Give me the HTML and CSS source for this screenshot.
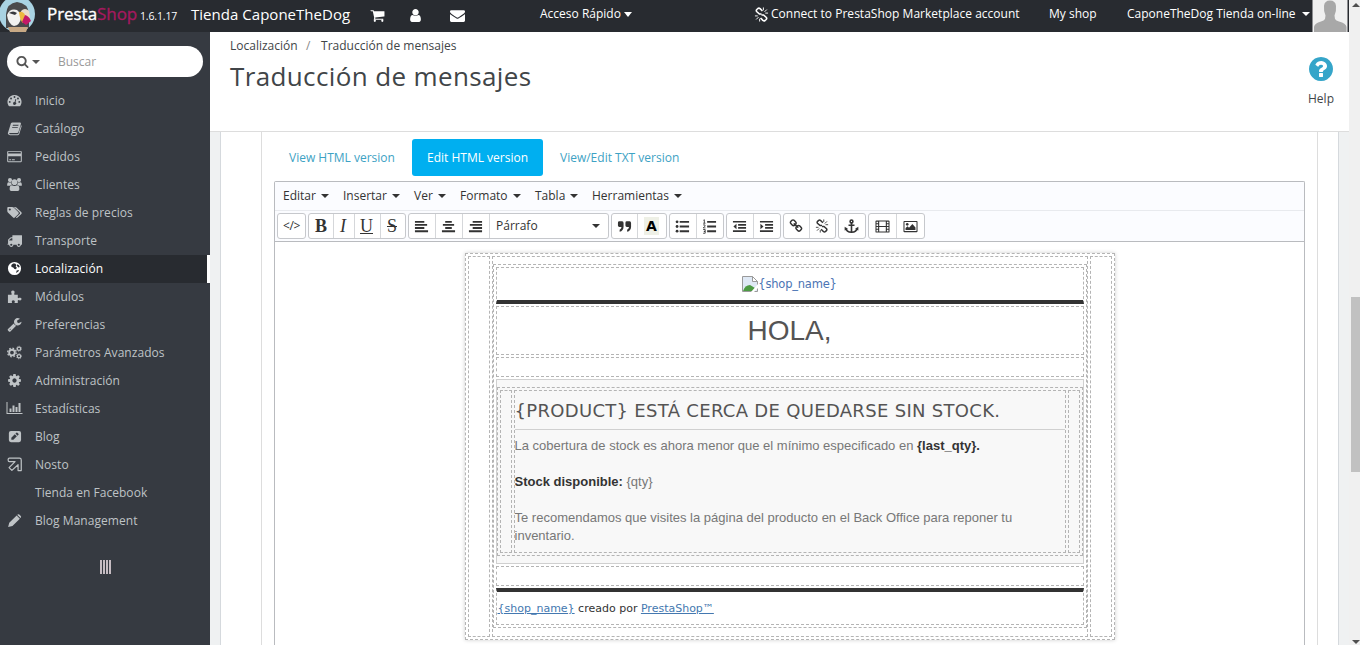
FILE: index.html
```html
<!DOCTYPE html>
<html lang="es">
<head>
<meta charset="utf-8">
<title>Traducción de mensajes</title>
<link rel="stylesheet" href="styles.css">
</head>
<body>
<svg class="sprite" aria-hidden="true">
  <symbol id="search" viewBox="0 0 1792 1792"><path d="M1216 832q0-185-131.5-316.5t-316.5-131.5-316.5 131.5-131.5 316.5 131.5 316.5 316.5 131.5 316.5-131.5 131.5-316.5zm512 832q0 52-38 90t-90 38q-54 0-90-38l-343-342q-179 124-399 124-143 0-273.500-55.500t-225-150-150-225-55.500-273.500 55.500-273.500 150-225 225-150 273.500-55.500 273.500 55.500 225 150 150 225 55.500 273.500q0 220-124 399l343 343q37 37 37 90z"/></symbol>
  <symbol id="cart" viewBox="0 0 1792 1792"><path d="M704 1536q0 52-38 90t-90 38-90-38-38-90 38-90 90-38 90 38 38 90zm896 0q0 52-38 90t-90 38-90-38-38-90 38-90 90-38 90 38 38 90zm128-1088v512q0 24-16.500 42.500t-40.500 21.500l-1044 122q13 60 13 70 0 16-24 64h920q26 0 45 19t19 45-19 45-45 19h-1024q-26 0-45-19t-19-45q0-11 8-31.500t16-36 21.500-40 15.500-29.500l-177-823h-204q-26 0-45-19t-19-45 19-45 45-19h256q16 0 28.500 6.500t19.500 15.500 13 24.500 8 26 5.500 29.500 4.500 26h1201q26 0 45 19t19 45z"/></symbol>
  <symbol id="user" viewBox="0 0 1792 1792"><path d="M1536 1399q0 109-62.500 187t-150.500 78h-854q-88 0-150.500-78t-62.500-187q0-85 8.500-160.500t31.500-152 58.500-131 94-89 134.500-34.500q131 128 313 128t313-128q76 0 134.500 34.500t94 89 58.500 131 31.500 152 8.500 160.500zm-256-887q0 159-112.500 271.500t-271.500 112.500-271.500-112.500-112.500-271.500 112.500-271.500 271.500-112.500 271.500 112.500 112.500 271.500z"/></symbol>
  <symbol id="mail" viewBox="0 0 1792 1792"><path d="M1792 710v794q0 66-47 113t-113 47h-1472q-66 0-113-47t-47-113v-794q44 49 101 87 362 246 497 345 57 42 92.500 65.500t94.500 48 110 24.500h2q51 0 110-24.500t94.500-48 92.500-65.500q170-123 498-345 57-39 100-87zm0-294q0 79-49 151t-122 123q-376 261-468 325-10 7-42.500 31t-54 38.500-52 32.500-57.500 27-50 9h-2q-23 0-50-9t-57.500-27-52-32.500-54-38.500-42.500-31q-91-64-262-182.500t-205-142.500q-62-42-117-115.500t-55-136.500q0-78 41.500-130t118.500-52h1472q65 0 112.500 47t47.500 113z"/></symbol>
  <symbol id="help" viewBox="128 128 1536 1536"><path d="M1024 1376v-192q0-14-9-23t-23-9h-192q-14 0-23 9t-9 23v192q0 14 9 23t23 9h192q14 0 23-9t9-23zm256-672q0-88-55.500-163t-138.500-116-170-41q-243 0-371 213-15 24 8 42l132 100q7 6 19 6 16 0 25-12 53-68 86-92 34-24 86-24 48 0 85.500 26t37.500 59q0 38-20 61t-68 45q-63 28-115.500 86.500t-52.500 125.500v36q0 14 9 23t23 9h192q14 0 23-9t9-23q0-19 21.500-49.500t54.500-49.500q32-18 49-28.500t46-35 44.500-48 28-60.500 12.500-81zm384 192q0 209-103 385.500t-279.500 279.500-385.500 103-385.500-103-279.500-279.500-103-385.500 103-385.500 279.500-279.500 385.500-103 385.500 103 279.500 279.500 103 385.500z"/></symbol>
  <symbol id="cog" viewBox="0 0 1792 1792"><path d="M1152 896q0-106-75-181t-181-75-181 75-75 181 75 181 181 75 181-75 75-181zm512-109v222q0 12-8 23t-20 13l-185 28q-19 54-39 91 35 50 107 138 10 12 10 25t-9 23q-27 37-99 108t-94 71q-12 0-26-9l-138-108q-44 23-91 38-16 136-29 186-7 28-36 28h-222q-14 0-24.500-8.500t-11.500-21.500l-28-184q-49-16-90-37l-141 107q-10 9-25 9-14 0-25-11-126-114-165-168-7-10-7-23 0-12 8-23 15-21 51-66.500t54-70.500q-27-50-41-99l-183-27q-13-2-21-12.500t-8-23.500v-222q0-12 8-23t19-13l186-28q14-46 39-92-40-57-107-138-10-12-10-24 0-10 9-23 26-36 98.500-107.500t94.500-71.500q13 0 26 10l138 107q44-23 91-38 16-136 29-186 7-28 36-28h222q14 0 24.500 8.500t11.500 21.500l28 184q49 16 90 37l142-107q9-9 24-9 13 0 25 10 129 119 165 170 7 8 7 22 0 12-8 23-15 21-51 66.500t-54 70.500q26 50 41 98l183 28q13 2 21 12.500t8 23.500z"/></symbol>
  <symbol id="wrench" viewBox="0 0 1792 1792"><path d="M448 1472q0-26-19-45t-45-19-45 19-19 45 19 45 45 19 45-19 19-45zm644-420l-682 682q-37 37-90 37-52 0-91-37l-106-108q-38-36-38-90 0-53 38-91l681-681q39 98 114.500 173.500t173.500 114.500zm634-435q0 39-23 106-47 134-164.500 217.500t-258.500 83.500q-185 0-316.500-131.500t-131.500-316.500 131.500-316.500 316.500-131.500q58 0 121.500 16.500t107.500 46.500q16 11 16 28t-16 28l-293 169v224l193 107q5-3 79-48.500t135.500-81 70.500-35.500q15 0 23.500 10t8.500 25z"/></symbol>
  <symbol id="pencil" viewBox="0 0 16 16"><path d="M10.300 2.600 13.700 6 5.800 13.800 1.200 15l1.200-4.600zM11.300 1.700q.9-.8 1.800 0l1.600 1.600q.8.900 0 1.800l-.3.300L11 2z"/></symbol>
  <symbol id="truck" viewBox="0 0 1792 1792"><path d="M640 1408q0-52-38-90t-90-38-90 38-38 90 38 90 90 38 90-38 38-90zm-384-512h384v-256h-158q-13 0-22 9l-195 195q-9 9-9 22v30zm1280 512q0-52-38-90t-90-38-90 38-38 90 38 90 90 38 90-38 38-90zm256-1088v1024q0 15-4 26.500t-13.500 18.500-16.500 11.500-23.500 6-22.500 2-25.500 0-22.500-.5q0 106-75 181t-181 75-181-75-75-181h-384q0 106-75 181t-181 75-181-75-75-181h-64q-3 0-22.500.5t-25.500 0-22.500-2-23.500-6-16.500-11.500-13.500-18.500-4-26.500q0-26 19-45t45-19v-320q0-8-.5-35t0-38 2.500-34.500 6.500-37 14-30.500 22.500-30l198-198q19-19 50.500-32t58.500-13h160v-192q0-26 19-45t45-19h1024q26 0 45 19t19 45z"/></symbol>
  <symbol id="link" viewBox="0 0 1792 1792"><path d="M1520 1216q0-40-28-68l-208-208q-28-28-68-28-42 0-72 32 3 3 19 18.500t21.500 21.500 15 19 13 25.500 3.500 27.500q0 40-28 68t-68 28q-15 0-27.500-3.500t-25.500-13-19-15-21.500-21.500-18.500-19q-33 31-33 73 0 40 28 68l206 207q27 27 68 27 40 0 68-26l147-146q28-28 28-67zm-703-705q0-40-28-68l-206-207q-28-28-68-28-39 0-68 27l-147 146q-28 28-28 67 0 40 28 68l208 208q27 27 68 27 42 0 72-31-3-3-19-18.500t-21.500-21.500-15-19-13-25.500-3.500-27.500q0-40 28-68t68-28q15 0 27.500 3.500t25.500 13 19 15 21.500 21.500 18.500 19q33-31 33-73zm895 705q0 120-85 203l-147 146q-83 83-203 83-121 0-204-85l-206-207q-83-83-83-203 0-123 88-209l-88-88q-86 88-208 88-120 0-204-84l-208-208q-84-84-84-204t85-203l147-146q83-83 203-83 121 0 204 85l206 207q83 83 83 203 0 123-88 209l88 88q86-88 208-88 120 0 204 84l208 208q84 84 84 204z"/></symbol>
  <symbol id="unlink" viewBox="0 0 16 16"><g fill="none" stroke="currentColor" stroke-width="1.700"><path d="M8 7.500H5.800L2.800 4.800Q2 3.700 3 2.700L4.200 1.600Q5.300.8 6.500 1.800L9 4.300M8 8.500h2.200l3 2.700q.8 1.100-.2 2.100l-1.200 1.100q-1.100.8-2.300-.2L7 11.700"/><path stroke-width="1" d="M4.800 10.800 2.300 13.300M4 9.500H1M6 12.500v3M11.200 5.200 13.700 2.700M12 6.500H15M10 3.500V.5"/></g></symbol>
  <symbol id="gauge" viewBox="0 0 16 16"><path fill-rule="evenodd" d="M8 2a7.500 7.500 0 0 0-6.300 11.500q.3.500.8.500h11q.5 0 .8-.5A7.500 7.500 0 0 0 8 2zM8 3.200a1 1 0 1 1 0 2 1 1 0 0 1 0-2zM4.300 4.800a1 1 0 1 1 0 2 1 1 0 0 1 0-2zM2.900 8.500a1 1 0 1 1 0 2 1 1 0 0 1 0-2zM13.100 8.500a1 1 0 1 1 0 2 1 1 0 0 1 0-2zM11.700 4.800a1 1 0 1 1 0 2 1 1 0 0 1 0-2zM9 6.300l.9.300-.8 3.200a1.600 1.600 0 1 1-1-.3z"/></symbol>
  <symbol id="book" viewBox="0 0 16 16"><path fill-rule="evenodd" d="M5.800 1.500h8.300q1 .2.800 1.300l-2.700 9q-.4 1-1.300 1H3q-.9 0-.6.700.3.600 1.200.6h7.700q.7 0 1-.8L15 4.500q.8.500.6 1.200l-2.500 8.200q-.4 1.200-1.600 1.200H3.300Q1.500 15 1 13.500q-.3-.8.200-1.500L4.200 2.500q.5-1 1.600-1zM6.400 4l-.4 1h6l.4-1zM5.700 6.300l-.4 1h6l.4-1z"/></symbol>
  <symbol id="card" viewBox="0 0 16 16"><path fill-rule="evenodd" d="M1.500 2h13q1.300 0 1.300 1.300v9.400q0 1.300-1.300 1.300h-13Q.2 14 .2 12.700V3.300Q.2 2 1.500 2zM1.300 3v1.800h13.400V3zM1.300 7.600V13h13.400V7.600zM2.400 11h2v1h-2zM5.300 11h3v1h-3z"/></symbol>
  <symbol id="users" viewBox="0 0 16 16"><circle cx="3.200" cy="3.300" r="2.200"/><circle cx="12.800" cy="3.300" r="2.200"/><circle cx="8" cy="5.500" r="3"/><path d="M.2 9.200Q0 5.600 1.600 5.500q1.500.8 2.900.2Q4.500 7.300 5.200 8.200 4 8.300 3.300 9.300H1Q.3 9.300.2 9.200zM15.800 9.200Q16 5.600 14.400 5.500q-1.500.8-2.900.2 0 1.600-.7 2.500 1.200.1 1.900 1.100H15q.7 0 .8-.1zM5.200 8.800q2.800 1.700 5.600 0Q13.300 8.900 13.200 13q0 1.800-1.700 1.800h-7Q2.800 14.800 2.800 13q-.1-4.100 2.400-4.200z"/></symbol>
  <symbol id="tags" viewBox="0 0 16 16"><path fill-rule="evenodd" d="M1.300 2h4.200q1 0 1.700.7l5 5q.8.900 0 1.800L8.300 13.400q-.9.800-1.800 0l-5.300-5.200Q.3 7.400.3 6.300V3Q.3 2 1.300 2zM3 3.600a1.100 1.100 0 1 0 0 2.200 1.100 1.100 0 0 0 0-2.200z"/><path d="M7.300 2h1q1 0 1.700.7l5.300 5q.8.900 0 1.800l-4 3.900q-1 .9-1.900-.1l4-3.700q.9-.9 0-1.900z"/></symbol>
  <symbol id="globe" viewBox="0 0 16 16"><path fill-rule="evenodd" d="M8 1a7 7 0 1 1 0 14A7 7 0 0 1 8 1zM6.500 2.700 4.600 4.200l.2 2.200 1.900.5 1.200 1.500 1.800.4.700-1.900-1.200-1.100.9-1.500-1.500-1.700zM11 3.500l-.5 1.600 1.500 1.700 1.600-.3-.8-1.900zM10.300 10l-.6 2.700 2.400-1.400.8-1.800z"/></symbol>
  <symbol id="puzzle" viewBox="0 0 16 16"><path d="M1 6h3.700Q5.400 5.600 4.700 4.500 3.800 1.600 6.300 1.500 8.700 1.600 7.900 4.500 7.200 5.600 8 6h3.500v3.400q.4.700 1.300 0 2.600-.7 2.700 1.300-.2 2-2.500 1.400-1.200-.8-1.500.1V15H8.200q-.5-.4.200-1.500.1-1.500-1.700-1.600-2 .2-1.600 1.800.7 1-.1 1.300H1z"/></symbol>
  <symbol id="cogs" viewBox="0 0 16 16"><g fill="none" stroke="currentColor"><circle cx="5.300" cy="8" r="3" stroke-width="2"/><circle cx="5.300" cy="8" r="4.600" stroke-width="1.400" stroke-dasharray="1.800 1.810"/><circle cx="12.800" cy="4" r="1.800" stroke-width="1.300"/><circle cx="12.800" cy="4" r="2.700" stroke-width=".8" stroke-dasharray="1.060 1.060"/><circle cx="12.800" cy="12" r="1.800" stroke-width="1.300"/><circle cx="12.800" cy="12" r="2.700" stroke-width=".8" stroke-dasharray="1.060 1.060"/></g></symbol>
  <symbol id="bars" viewBox="0 0 16 16"><path d="M0 2h1v11h15v1H0zM3 8.500h2V12H3zM6 5.500h2V12H6zM9 7h2v5H9zM12 3h2v9h-2z"/></symbol>
  <symbol id="penbox" viewBox="0 0 16 16"><path fill-rule="evenodd" d="M4.200 2h8.600Q15 2 15 4.200v7.600q0 2.200-2.200 2.200H4.200Q2 14 2 11.800V4.200Q2 2 4.200 2zM4.600 9.300v2.200h2.200l3.700-3.700-2.200-2.200zM9 4.900l2.200 2.200 1-1q.5-.5 0-1l-1.200-1.200q-.5-.5-1 0z"/></symbol>
  <symbol id="nosto" viewBox="0 0 16 16"><path fill="none" stroke="currentColor" stroke-width="1.300" stroke-linejoin="round" d="M2.600 1.200H13.300Q15.200 1.200 15.200 3.100V14.500H11.800V8.200L5.200 14.300 2.200 11.300 8.600 5H2.600Q1.200 5 1.200 3.100T2.600 1.200z"/></symbol>
  <symbol id="anchor" viewBox="0 0 16 16"><g fill="none" stroke="currentColor" stroke-width="1.700"><circle cx="8" cy="2.600" r="1.500"/><path d="M8 4v10M4.800 6.700h6.400M1.700 9.600Q2.600 14 8 14.200 13.400 14 14.300 9.600"/></g><path d="M.7 12.300V8.200l3.700 2.500zM15.300 12.300V8.200l-3.700 2.500z"/></symbol>
  <symbol id="film" viewBox="0 0 16 16"><path fill-rule="evenodd" d="M1.500 1.500h13q1 0 1 1v11q0 1-1 1h-13q-1 0-1-1v-11q0-1 1-1zM4.500 2.600v4.800h7V2.600zM4.500 8.600v4.800h7V8.600zM1.600 2.800v1.700h1.700V2.800zM1.600 5.700v1.700h1.700V5.700zM1.600 8.600v1.700h1.700V8.600zM1.600 11.500v1.700h1.700v-1.700zM12.700 2.800v1.700h1.700V2.800zM12.700 5.700v1.700h1.700V5.700zM12.700 8.600v1.700h1.700V8.600zM12.700 11.500v1.700h1.700v-1.700z"/></symbol>
  <symbol id="image" viewBox="0 0 16 16"><path fill-rule="evenodd" d="M1.500 2h13q1 0 1 1v10q0 1-1 1h-13q-1 0-1-1V3q0-1 1-1zM1.600 3.100v9.800h12.800V3.100z"/><circle cx="4.500" cy="5.700" r="1.400"/><path d="M2.700 11.800V9.700l2.200-2 1.500 1.500 3.600-3.800L13.300 9v2.800z"/></symbol>
  <symbol id="al" viewBox="0 0 16 16"><path d="M1 2h10v2H1zM1 5.300h13v2H1zM1 8.600h10v2H1zM1 12h14v2H1z"/></symbol>
  <symbol id="ac" viewBox="0 0 16 16"><path d="M4.500 2h7v2h-7zM2 5.300h12v2H2zM4.500 8.600h7v2h-7zM1 12h14v2H1z"/></symbol>
  <symbol id="ar" viewBox="0 0 16 16"><path d="M5 2h10v2H5zM2 5.300h13v2H2zM5 8.600h10v2H5zM1 12h14v2H1z"/></symbol>
  <symbol id="ul" viewBox="0 0 16 16"><circle cx="2.200" cy="3" r="1.500"/><circle cx="2.200" cy="8" r="1.500"/><circle cx="2.200" cy="13" r="1.500"/><path d="M5 2h10v2H5zM5 7h10v2H5zM5 12h10v2H5z"/></symbol>
  <symbol id="ol" viewBox="0 0 16 16"><path d="M5.500 2H15v2H5.500zM5.500 7H15v2H5.500zM5.500 12H15v2H5.500z"/><path fill="none" stroke="currentColor" stroke-width=".9" d="M1.500 1.400 2.500.8V4.500M1.300 4.500h2.400M1.200 6.300h2v1.300L1.300 9.500h2.400M1.200 11.200h2.200v2H2h1.400v2H1.200"/></symbol>
  <symbol id="out" viewBox="0 0 16 16"><path d="M1 2h14v1.800H1zM6.500 5.300H15v1.800H6.500zM6.500 8.600H15v1.800H6.500zM1 12h14v1.800H1zM4.800 5v5.800L1.500 7.900z"/></symbol>
  <symbol id="in" viewBox="0 0 16 16"><path d="M1 2h14v1.800H1zM6.500 5.300H15v1.800H6.500zM6.500 8.600H15v1.800H6.500zM1 12h14v1.800H1zM1.500 5v5.800l3.300-2.900z"/></symbol>
  <symbol id="quote" viewBox="0 0 16 16"><path d="M2.500 2.500h3Q7 2.500 7 4.300v3.900q-.2 4.500-4.200 5.300V11.400Q4.800 10.500 4.800 8.500H2.500Q1 8.500 1 7V4q0-1.500 1.500-1.500zM10.500 2.500h3q1.500 0 1.500 1.800v3.900q-.2 4.500-4.200 5.300V11.400q2-.9 2-2.900h-2.300Q9 8.500 9 7V4q0-1.500 1.500-1.500z"/></symbol>
</svg>
<div class="app">
  <header class="topbar">
    <svg class="puffin" viewBox="0 0 36 32">
      <circle cx="17" cy="14" r="18" fill="#a9d3e3"/>
      <path d="M6 28V14Q7 3 17 2q11 1 12 12v14z" fill="#4a4a4c"/>
      <path d="M7 15Q10 8 17 10q4 3 4 8-1 7-7 8-6-2-7-11z" fill="#f2f2f0"/>
      <path d="M21 11Q25 7 29 11l1 6-4 4-4-3z" fill="#e9dccb"/>
      <path d="M19 12q4-1 6 3l-2 8q-3-2-4-11z" fill="#edb83f"/>
      <path d="M25 15q4 1 6 6l-5 4-4-3z" fill="#c41968"/>
      <path d="M9 13q4-3 8 0l-2 2q-3-1-6-2z" fill="#36383d"/>
      <path d="M8 27h20l-2 5H10z" fill="#c8a985"/>
    </svg>
    <div class="brand"><span>Presta</span><span class="pink">Shop</span></div>
    <span class="version">1.6.1.17</span>
    <span class="store">Tienda CaponeTheDog</span>
    <svg class="ic t1"><use href="#cart"/></svg>
    <svg class="ic t2"><use href="#user"/></svg>
    <svg class="ic t3"><use href="#mail"/></svg>
    <span class="quick">Acceso Rápido<i class="caret big"></i></span>
    <span class="connect"><svg class="ic"><use href="#unlink"/></svg>Connect to PrestaShop Marketplace account</span>
    <span class="myshop">My shop</span>
    <span class="account">CaponeTheDog Tienda on-line<i class="caret"></i></span>
    <svg class="avatar" viewBox="0 0 35 32"><rect width="35" height="32" fill="#f0f0f0"/><path d="M17.500.5Q23 .5 23.500 6q.5 5-1.500 9.500l.5 3.500q1 1.500 4 2.500 7 1.500 7.500 5.500v5H1.500v-5Q2 23 8.500 21.500q3-1 4-2.500l.5-3.500Q11 11 11.500 6 12 .5 17.500.5z" fill="#a8a8a8"/></svg>
  </header>
  <div class="body">
    <nav class="side">
      <div class="search"><svg class="ic"><use href="#search"/></svg><i class="caret"></i><span>Buscar</span></div>
      <div class="menu">
        <a><svg class="ic"><use href="#gauge"/></svg>Inicio</a>
        <a><svg class="ic"><use href="#book"/></svg>Catálogo</a>
        <a><svg class="ic"><use href="#card"/></svg>Pedidos</a>
        <a><svg class="ic"><use href="#users"/></svg>Clientes</a>
        <a><svg class="ic"><use href="#tags"/></svg>Reglas de precios</a>
        <a><svg class="ic"><use href="#truck"/></svg>Transporte</a>
        <a class="on"><svg class="ic"><use href="#globe"/></svg>Localización</a>
        <a><svg class="ic"><use href="#puzzle"/></svg>Módulos</a>
        <a><svg class="ic"><use href="#wrench"/></svg>Preferencias</a>
        <a><svg class="ic"><use href="#cogs"/></svg>Parámetros Avanzados</a>
        <a><svg class="ic"><use href="#cog"/></svg>Administración</a>
        <a><svg class="ic wide"><use href="#bars"/></svg>Estadísticas</a>
        <a><svg class="ic"><use href="#penbox"/></svg>Blog</a>
        <a><svg class="ic"><use href="#nosto"/></svg>Nosto</a>
        <a><svg class="ic"></svg>Tienda en Facebook</a>
        <a><svg class="ic"><use href="#pencil"/></svg>Blog Management</a>
      </div>
      <div class="grip"><i></i><i></i><i></i><i></i></div>
    </nav>
    <main class="main">
      <div class="head">
        <div class="titles">
          <div class="crumbs"><span>Localización</span><em>/</em><span>Traducción de mensajes</span></div>
          <h1>Traducción de mensajes</h1>
        </div>
        <div class="help"><svg><use href="#help"/></svg><span>Help</span></div>
      </div>
      <div class="page">
        <div class="panel">
          <div class="inner">
            <div class="tabs"><a class="v">View HTML version</a><a class="e">Edit HTML version</a><a>View/Edit TXT version</a></div>
            <div class="editor">
              <div class="menubar">
                <span class="m1">Editar<i class="caret"></i></span><span class="m2">Insertar<i class="caret"></i></span><span class="m3">Ver<i class="caret"></i></span><span class="m4">Formato<i class="caret"></i></span><span class="m5">Tabla<i class="caret"></i></span><span>Herramientas<i class="caret"></i></span>
              </div>
              <div class="tools">
                <div class="grp g1"><b class="code">&lt;/&gt;</b></div>
                <div class="grp g2"><b class="sf bold">B</b><b class="sf ital">I</b><b class="sf und">U</b><b class="sf strike">S</b></div>
                <div class="grp g3"><b><svg class="ic"><use href="#al"/></svg></b><b><svg class="ic"><use href="#ac"/></svg></b><b><svg class="ic"><use href="#ar"/></svg></b><b class="format"><span>Párrafo</span><i class="caret"></i></b></div>
                <div class="grp g4"><b><svg class="ic"><use href="#quote"/></svg></b><b><span class="color">A</span></b></div>
                <div class="grp g5"><b><svg class="ic"><use href="#ul"/></svg></b><b><svg class="ic"><use href="#ol"/></svg></b></div>
                <div class="grp g5"><b><svg class="ic"><use href="#out"/></svg></b><b><svg class="ic"><use href="#in"/></svg></b></div>
                <div class="grp g6"><b><svg class="ic small"><use href="#link"/></svg></b><b><svg class="ic small"><use href="#unlink"/></svg></b></div>
                <div class="grp g7"><b><svg class="ic"><use href="#anchor"/></svg></b></div>
                <div class="grp g8"><b><svg class="ic"><use href="#film"/></svg></b><b><svg class="ic"><use href="#image"/></svg></b></div>
              </div>
              <div class="canvas">
                <div class="mail">
                  <div class="d gutter"></div>
                  <div class="d middle">
                    <div class="d content">
                      <div class="d logo"><svg viewBox="0 0 16 16"><path d="M.5.500h10l5 5v10H.5z" fill="#dfe9f5" stroke="#9a9a9a"/><path d="M1 15q2-6 7-6l5 3v3z" fill="#4d9b43"/><path d="M10.500.5v5h5z" fill="#fff" stroke="#9a9a9a"/><path d="m16 8-7 8h3l4-4z" fill="#fff"/></svg><a>{shop_name}</a></div>
                      <div class="d hola">HOLA,</div>
                      <div class="d gap"></div>
                      <div class="box">
                        <div class="d boxtable">
                          <div class="d thin"></div>
                          <div class="d msg">
                            <h2>{PRODUCT} ESTÁ CERCA DE QUEDARSE SIN STOCK.</h2>
                            <p>La cobertura de stock es ahora menor que el mínimo especificado en <strong>{last_qty}.</strong></p>
                            <p><strong>Stock disponible:</strong> {qty}</p>
                            <p>Te recomendamos que visites la página del producto en el Back Office para reponer tu<br>inventario.</p>
                          </div>
                          <div class="d thin"></div>
                        </div>
                      </div>
                      <div class="d gap"></div>
                      <div class="d foot"><a>{shop_name}</a> creado por <a>PrestaShop™</a></div>
                    </div>
                  </div>
                  <div class="d gutter"></div>
                </div>
              </div>
            </div>
          </div>
        </div>
      </div>
    </main>
  </div>
  <div class="scroll"><i class="up"></i><i class="thumb"></i><i class="down"></i></div>
</div>
</body>
</html>
```

FILE: styles.css
```css
* { box-sizing: border-box; }
body { margin: 0; font: 12px/18px "Open Sans", "Noto Sans", sans-serif; color: #414548; background: #fff; }
.sprite { display: none; }
.app { display: grid; grid-template: 32px 613px / 1349px 11px; width: 1360px; height: 645px; overflow: hidden; }
.ic { width: 15px; height: 15px; fill: currentColor; flex: none; display: block; }
i, em { font-style: normal; }
.caret { display: inline-block; flex: none; border: 4px solid transparent; border-top-color: currentColor; border-bottom: 0; }
.caret.big { border-width: 5px 4.500px 0; margin-left: 3px; }

.topbar { background: #282b30; color: #fff; display: flex; align-items: center; height: 32px; padding-bottom: 4px; white-space: nowrap; }
.topbar > * { flex: none; }
.puffin { width: 36px; height: 32px; margin-bottom: -4px; }
.brand { width: 87px; margin-left: 11px; font-size: 17px; letter-spacing: -.05px; font-weight: 400; -webkit-text-stroke: .35px currentColor; margin-top: -1px; }
.brand .pink { color: #a5195f; }
.version { margin-left: 6px; width: 51px; font-size: 10.500px; padding-top: 3px; letter-spacing: -.15px; }
.store { width: 179px; font-size: 15px; margin-top: -1px; letter-spacing: .03px; }
.topbar .ic { width: 15px; height: 15px; }
.t1, .t2, .t3 { margin-top: 3px; }
.t2 { margin-left: 23px; }
.t3 { margin-left: 27px; }
.quick { margin-left: 75px; width: 214px; display: flex; align-items: center; letter-spacing: 0; }
.connect { display: flex; align-items: center; width: 295px; gap: 2px; letter-spacing: .02px; }
.myshop { width: 78px; }
.account { width: 185px; display: flex; align-items: center; }
.account .caret { margin-left: 6px; }
.avatar { width: 36px; height: 32px; margin-bottom: -4px; }

.body { grid-row: 2; display: grid; grid-template-columns: 210px 1139px; }
.side { background: #363a41; color: #bfc3c6; padding-top: 14px; }
.search { height: 31px; width: 196px; margin-left: 7px; border-radius: 16px; background: #fff; display: flex; align-items: center; padding-left: 9px; color: #555; }
.search .ic { width: 13px; height: 13px; }
.search .caret { margin-left: 3px; }
.search span { margin-left: 18px; color: #999; }
.menu { margin-top: 10px; font-size: 12px; }
.menu a { height: 28px; display: flex; align-items: center; padding-left: 7px; gap: 13px; letter-spacing: .04px; }
.menu .ic { margin-bottom: 2px; }
.menu .wide { width: 17px; height: 16px; margin-left: -1px; margin-right: -1px; }
.menu .on { background: #282b30; color: #fff; border-right: 3px solid #fff; }
.grip { display: flex; justify-content: center; gap: 1px; margin-top: 25px; }
.grip i { width: 2px; height: 14px; background: #c6bcc2; }

.main { display: flex; flex-direction: column; height: 613px; background: #eff1f2; }
.head { height: 100px; flex: none; background: #fff; border-bottom: 1px solid #ddd; display: flex; justify-content: space-between; padding: 5px 14px 0 20px; }
.crumbs { display: flex; gap: 9.500px; }
.crumbs em { color: #888; margin-left: -1px; margin-right: 1px; }
h1 { margin: 6px 0 0; font: 400 26px/30px "Open Sans", sans-serif; letter-spacing: .37px; }
.help { display: flex; flex-direction: column; align-items: center; width: 28px; padding-top: 20px; }
.help svg { width: 24px; height: 24px; fill: #35a5c9; }
.help span { margin-top: 9px; }
.page { flex: 1; padding: 0 10px; display: flex; }
.panel { flex: 1; background: #fff; border: 1px solid #d5d9dd; border-width: 0 1px; padding: 0 20px 0 40px; }
.inner { height: 100%; border: 1px solid #ddd; border-width: 0 1px; padding: 7px 12px 0; display: flex; flex-direction: column; }
.tabs { display: flex; color: #3da2c4; height: 37px; align-items: center; }
.tabs a { padding-left: 15px; }
.tabs .v { width: 138px; }
.tabs .e { width: 131px; margin-right: 2px; line-height: 37px; background: #00aff0; color: #fff; border-radius: 3px; }
.editor { margin-top: 5px; flex: 1; min-height: 0; width: 1031px; border: 1px solid #b9bbbf; border-bottom: 0; border-radius: 2px 2px 0 0; display: flex; flex-direction: column; color: #333; overflow: hidden; }
.menubar { height: 29px; flex: none; background: #fbfcff; border-bottom: 1px solid #e8eaee; display: flex; padding: 5px 0 0 8px; }
.menubar span { white-space: nowrap; }
.menubar .caret { margin: 0 0 2px 5px; }
.m1 { width: 60px; } .m2 { width: 71px; } .m3 { width: 46px; } .m4 { width: 75px; } .m5 { width: 57px; }
.tools { height: 31px; flex: none; background: #fbfcff; border-bottom: 1px solid #b9bbbf; display: flex; gap: 2px; padding: 2px 0 0 2px; }
.grp { height: 26px; border: 1px solid #c6c8cc; border-radius: 3px; background: #fff; display: grid; overflow: hidden; }
.grp b { display: flex; align-items: center; justify-content: center; border-left: 1px solid #d5d7da; font-weight: 400; padding-right: 1px; }
.grp b:first-child { border-left: 0; }
.grp .small { width: 14px; height: 14px; }
.g1 { width: 29px; }
.g2 { width: 98px; grid-template-columns: 24px 21px 26px 1fr; }
.g3 { width: 201px; grid-template-columns: 26px 27px 27px 1fr; }
.g4 { width: 56px; grid-template-columns: 25px 1fr; }
.g5 { width: 55px; grid-template-columns: 26px 1fr; }
.g6 { width: 53px; grid-template-columns: 25px 1fr; }
.g7 { width: 28px; }
.g8 { width: 57px; grid-template-columns: 27px 1fr; }
.grp .code { font-size: 12px; letter-spacing: -.3px; padding: 0; }
.grp .sf { font: 18px/24px "Liberation Serif", serif; padding-right: 2px; }
.grp .bold { font-weight: 700; padding-right: 0; }
.grp .ital { font-style: italic; }
.und { text-decoration: underline; }
.strike { text-decoration: line-through; }
.grp .format { justify-content: space-between; padding: 0 8px 0 6px; }
.color { font: 700 14px/18px "DejaVu Sans", sans-serif; background: #eef0e6; width: 15px; text-align: center; color: #000; }
.canvas { padding: 11px 0 0 190px; background: #fff; }
.d, .mail { border: 1px dashed #b4b4b4; }
.mail { width: 650px; height: 387px; padding: 2px; display: flex; gap: 2px; box-shadow: 0 0 4px #ccc; }
.gutter { width: 22px; }
.gutter:last-child { width: 23px; }
.middle { width: 596px; flex: none; padding: 7px 0 0; }
.content { height: 364px; padding: 2px; width: 594px; display: flex; flex-direction: column; gap: 2px; }
.logo { height: 37px; border-bottom: 4px solid #333; display: flex; justify-content: center; align-items: center; font: 11.500px "DejaVu Sans", sans-serif; color: #4b74b4; letter-spacing: -.2px; }
.logo svg { width: 16px; height: 16px; }
.hola { height: 49px; text-align: center; font: 28px/47px "Liberation Sans", sans-serif; color: #555454; }
.gap { height: 20px; }
.box { height: 185px; border: 1px solid #d0d0d0; background: #f8f8f8; padding-top: 7px; }
.boxtable { height: 169px; padding: 2px; display: flex; gap: 2px; }
.thin { width: 12px; flex: none; }
.msg { flex: 1; font: 13px/18px "Liberation Sans", sans-serif; color: #777; white-space: nowrap; }
.msg h2 { margin: 0 0 7px; height: 39px; font: 18px/40px "DejaVu Sans", sans-serif; letter-spacing: .31px; color: #555454; border-bottom: 1px solid #d0d0d0; }
.msg p { margin: 0 0 18px; }
.msg strong { color: #333; }
.foot { height: 37px; border-top: 4px solid #333; font: 11px/34px "DejaVu Sans", sans-serif; padding-left: 1px; }
.foot a { color: #4478b0; text-decoration: underline; }

.scroll { grid-column: 2; grid-row: 1 / 3; background: #f0f0f0; display: flex; flex-direction: column; align-items: flex-end; }
.scroll .up { border: 4px solid transparent; border-top: 0; border-bottom-color: #505050; margin-top: 3px; }
.scroll .thumb { width: 9px; height: 175px; margin-top: 290px; background: #c1c1c1; }
.scroll .down { margin-top: 168px; border: 4px solid transparent; border-bottom: 0; border-top-color: #505050; }
```
